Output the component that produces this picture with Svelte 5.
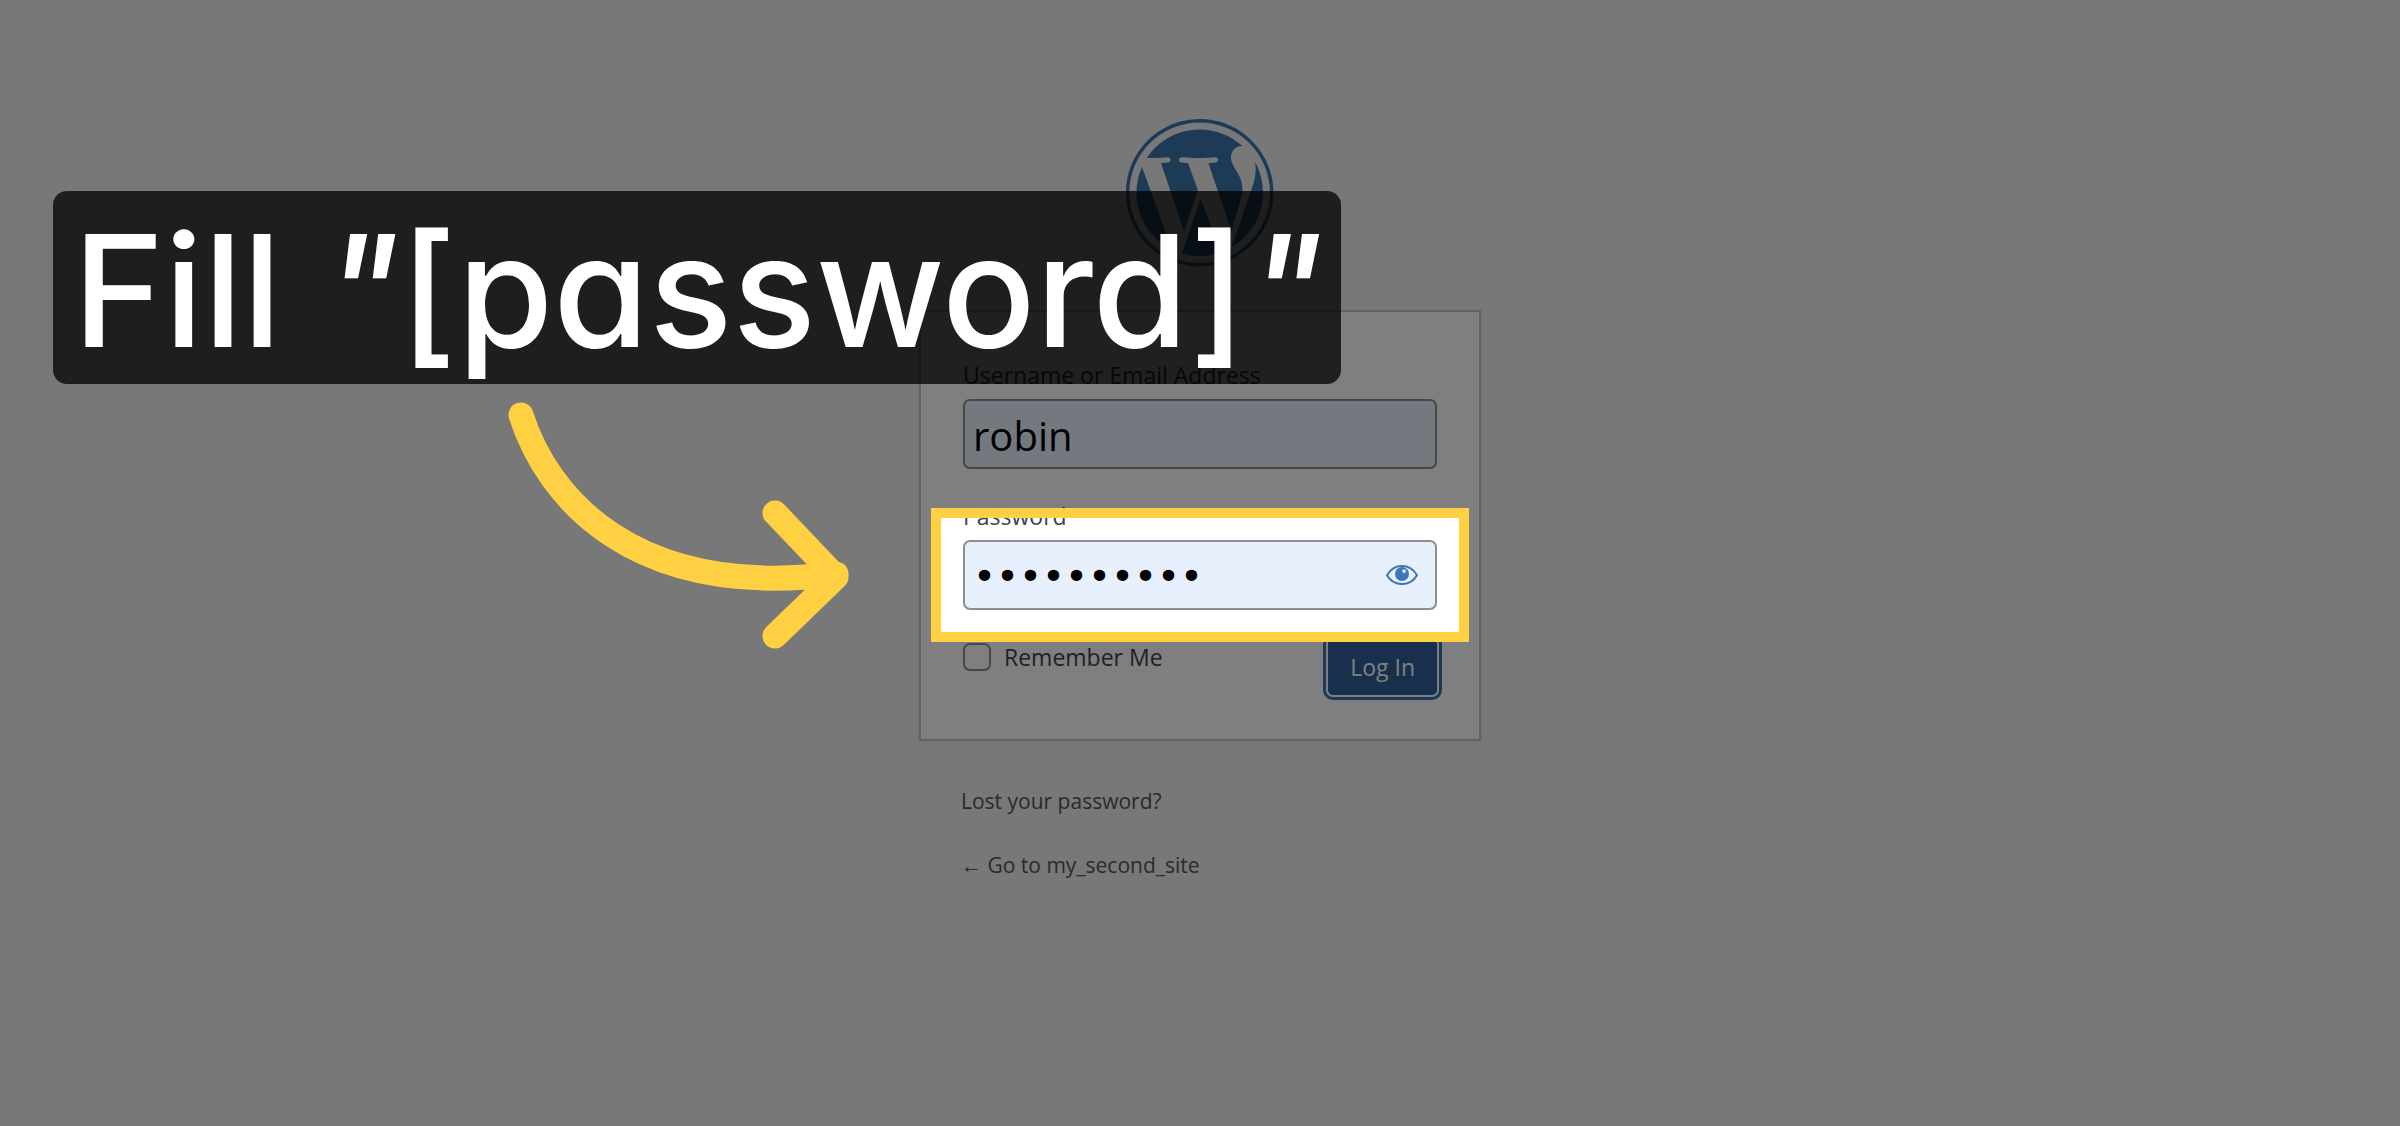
<script lang="ts">
  let username = $state('robin');
  let password = $state('password12');
  let remember = $state(false);
  let showPassword = $state(false);
</script>

<main class="page">
  <div class="login">
    <a class="logo" href="#wordpress" aria-label="Powered by WordPress">
      <svg viewBox="0 0 123 123" aria-hidden="true">
        <path d="m8.708 61.26c0 20.802 12.089 38.779 29.619 47.298l-25.069-68.686c-2.916 6.536-4.55 13.769-4.55 21.388z" />
        <path d="m96.74 58.608c0-6.495-2.333-10.993-4.334-14.494-2.664-4.329-5.161-7.995-5.161-12.324 0-4.831 3.664-9.328 8.825-9.328.233 0 .454.029.681.042-9.35-8.566-21.807-13.796-35.489-13.796-18.36 0-34.513 9.42-43.91 23.688 1.233.037 2.395.063 3.382.063 5.497 0 14.006-.667 14.006-.667 2.833-.167 3.167 3.994.337 4.329 0 0-2.847.335-6.015.501l19.138 56.925 11.501-34.493-8.188-22.434c-2.83-.166-5.511-.501-5.511-.501-2.832-.166-2.5-4.496.332-4.329 0 0 8.679.667 13.843.667 5.496 0 14.006-.667 14.006-.667 2.835-.167 3.168 3.994.337 4.329 0 0-2.853.335-6.015.501l18.992 56.494 5.242-17.517c2.272-7.269 4.001-12.49 4.001-16.989z" />
        <path d="m62.184 65.857-15.768 45.819c4.708 1.384 9.687 2.141 14.846 2.141 6.12 0 11.989-1.058 17.452-2.979-.141-.225-.269-.464-.374-.724z" />
        <path d="m107.376 36.046c.226 1.674.354 3.471.354 5.404 0 5.333-.996 11.328-3.996 18.824l-16.053 46.413c15.624-9.111 26.133-26.038 26.133-45.426.001-9.137-2.333-17.729-6.438-25.215z" />
        <path d="m61.262 0c-33.779 0-61.262 27.481-61.262 61.26 0 33.783 27.483 61.263 61.262 61.263 33.778 0 61.265-27.48 61.265-61.263-.001-33.779-27.487-61.26-61.265-61.26zm0 119.715c-32.23 0-58.453-26.223-58.453-58.455 0-32.23 26.222-58.451 58.453-58.451 32.229 0 58.45 26.221 58.45 58.451 0 32.232-26.221 58.455-58.45 58.455z" />
      </svg>
    </a>

    <form class="card" onsubmit={(e) => e.preventDefault()}>
      <div class="field">
        <label for="user">Username or Email Address</label>
        <input id="user" class="text-input" type="text" bind:value={username} />
      </div>

      <div class="field">
        <label for="pass">Password</label>
        <div class="password-wrap">
          <input
            id="pass"
            class="text-input secret"
            type={showPassword ? 'text' : 'password'}
            bind:value={password}
          />
          <button
            type="button"
            class="toggle"
            aria-label="Show password"
            onclick={() => (showPassword = !showPassword)}
          >
            <svg viewBox="0 0 32 20" aria-hidden="true">
              <path
                d="M1 10.2 C8 -2 24 -2 31 10.2 C24 22 8 22 1 10.2 Z"
                fill="none"
                stroke="currentColor"
                stroke-width="2"
              />
              <circle cx="16" cy="9" r="7" fill="currentColor" />
              <rect class="glint" x="16.4" y="4.4" width="3.4" height="3.4" rx="1" />
            </svg>
          </button>
          <div class="spotlight"></div>
        </div>
      </div>

      <div class="actions">
        <label class="remember">
          <input type="checkbox" bind:checked={remember} />
          Remember Me
        </label>
        <button class="submit" type="submit">Log In</button>
      </div>
    </form>

    <nav class="links">
      <a href="#lost">Lost your password?</a>
      <a href="#home">← Go to my_second_site</a>
    </nav>

    <!-- Step callout and its pointer, drawn over the dimmed page -->
    <div class="callout">Fill <i>"</i>[password]<i>"</i></div>
    <svg class="arrow" viewBox="28 22 342 248" aria-hidden="true">
      <path d="M41 35 C67 117 153 220 356 194" />
      <path d="M295 133 L356 197 L295 256" />
    </svg>
  </div>
</main>

<style>
  :global(body) {
    margin: 0;
    background: #f0f0f1;
  }

  .page {
    position: relative;
    box-sizing: border-box;
    min-height: 100vh;
    padding: 119px 0 60px;
    overflow: hidden;
    background: #f0f0f1;
    color: #3c434a;
    font-family: 'Open Sans', 'Noto Sans', sans-serif;
    font-size: 23px;
    line-height: 36px;
  }

  .login {
    position: relative;
    width: 562px;
    margin: 0 auto;
  }

  .logo {
    display: block;
    width: 148px;
    height: 148px;
    margin: 0 auto 43px;
  }

  .logo svg {
    display: block;
    width: 100%;
    height: 100%;
    fill: #3a76ae;
  }

  .card {
    display: flex;
    flex-direction: column;
    gap: 29px;
    padding: 45px 42px 44px;
    background: #fff;
    border: 2px solid #c3c4c7;
    box-shadow: 0 2px 5px rgba(0, 0, 0, 0.04);
  }

  .field {
    display: flex;
    flex-direction: column;
    gap: 6px;
  }

  .text-input {
    box-sizing: border-box;
    display: block;
    width: 100%;
    height: 70px;
    padding: 3px 8px 0;
    background: #e8f0fe;
    border: 2px solid #8c8f94;
    border-radius: 7px;
    color: #000;
    font-family: inherit;
    font-size: 40px;
    outline: none;
  }

  .secret {
    padding-right: 70px;
    font-family: 'DejaVu Sans', sans-serif;
    font-size: 39px;
  }

  .password-wrap {
    position: relative;
  }

  .toggle {
    position: absolute;
    top: 0;
    right: 0;
    display: flex;
    align-items: center;
    justify-content: center;
    width: 70px;
    height: 70px;
    padding: 0;
    background: none;
    border: 0;
    color: #3a78b8;
  }

  .toggle svg {
    width: 32px;
    height: 20px;
  }

  .glint {
    fill: #e8f0fe;
  }

  /* Frames the active field; its shadow dims everything else */
  .spotlight {
    position: absolute;
    inset: -32px;
    z-index: 1;
    border: 10px solid #ffd042;
    box-shadow: 0 0 0 4000px rgba(0, 0, 0, 0.5);
    pointer-events: none;
  }

  .actions {
    display: flex;
    align-items: flex-start;
    justify-content: space-between;
  }

  .remember {
    display: flex;
    align-items: center;
    gap: 13px;
  }

  .remember input {
    appearance: none;
    box-sizing: border-box;
    width: 28px;
    height: 28px;
    margin: 0;
    background: #fff;
    border: 2px solid #8c8f94;
    border-radius: 7px;
  }

  .submit {
    height: 56px;
    padding: 0 22px;
    background: #305e9a;
    border: 0;
    border-radius: 5px;
    box-shadow: 0 0 0 2px #fff, 0 0 0 5px #3874ae;
    color: #fff;
    font: inherit;
  }

  .links {
    display: flex;
    flex-direction: column;
    align-items: flex-start;
    gap: 32px;
    padding: 44px 42px 0;
    font-size: 21px;
    line-height: 32px;
  }

  .links a {
    color: #50575e;
    text-decoration: none;
  }

  .callout {
    position: absolute;
    top: 72px;
    left: -866px;
    z-index: 2;
    box-sizing: border-box;
    width: 1288px;
    height: 193px;
    padding: 0 20px;
    background: rgba(0, 0, 0, 0.75);
    border-radius: 14px;
    color: #fff;
    font-family: Inter, 'Open Sans', sans-serif;
    font-size: 155px;
    font-weight: 500;
    font-feature-settings: 'cv11';
    line-height: 200px;
    white-space: nowrap;
  }

  .arrow {
    position: absolute;
    top: 283px;
    left: -411px;
    z-index: 2;
    width: 342px;
    height: 248px;
    fill: none;
    stroke: #ffd042;
    stroke-width: 25;
    stroke-linecap: round;
    stroke-linejoin: round;
    pointer-events: none;
  }
</style>
